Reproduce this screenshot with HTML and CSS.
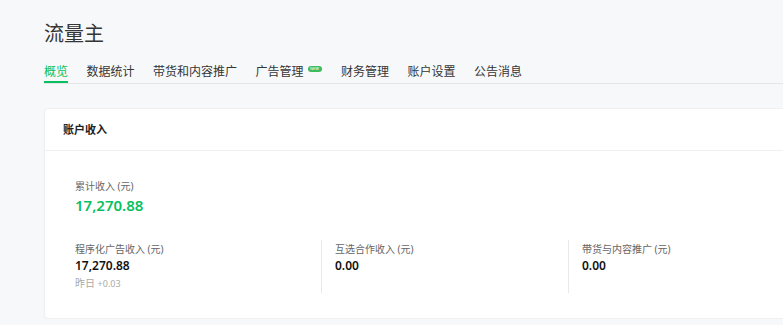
FILE: index.html
```html
<!DOCTYPE html>
<html lang="zh-CN">
<head>
    <meta charset="UTF-8">
    <title>流量主</title>
    <meta name="viewport" content="width=device-width, initial-scale=1.0">
    <link rel="stylesheet" href="styles.css">
</head>
<body>
    <div class="page">
        <div class="page-title">流量主</div>
        <div class="tabs">
            <div class="tab active">概览</div>
            <div class="tab">数据统计</div>
            <div class="tab">带货和内容推广</div>
            <div class="tab">广告管理<span class="badge-new">NEW</span></div>
            <div class="tab">财务管理</div>
            <div class="tab">账户设置</div>
            <div class="tab">公告消息</div>
        </div>

        <div class="card">
            <div class="card-header">账户收入</div>
            <div class="card-body">
                <div class="total-label">累计收入 (元)</div>
                <div class="total-value">17,270.88</div>
                <div class="income-row">
                    <div class="income-col">
                        <div class="income-label">程序化广告收入 (元)</div>
                        <div class="income-value">17,270.88</div>
                        <div class="income-sub">昨日 <span>+0.03</span></div>
                    </div>
                    <div class="income-col">
                        <div class="income-label">互选合作收入 (元)</div>
                        <div class="income-value">0.00</div>
                    </div>
                    <div class="income-col">
                        <div class="income-label">带货与内容推广 (元)</div>
                        <div class="income-value">0.00</div>
                    </div>
                </div>
            </div>
        </div>
    </div>
</body>
</html>
```

FILE: styles.css
```css
body {
    margin: 0;
    background: #f7f8fa;
    font-family: "Noto Sans", "Noto Sans CJK SC", sans-serif;
    color: #353535;
    overflow: hidden;
}

.page {
    padding: 20px 0 0 44px;
    width: 800px;
}

.page-title {
    font-size: 20px;
    line-height: 28px;
    color: #353535;
    margin-bottom: 15px;
}

.tabs {
    display: flex;
    gap: 18.5px;
    border-bottom: 1px solid #e4e5e7;
}

.tab {
    display: flex;
    align-items: flex-start;
    gap: 4px;
    font-size: 12px;
    line-height: 18px;
    color: #353535;
    border-bottom: 2px solid transparent;
}

.tab.active {
    color: #07c160;
    border-bottom-color: #07c160;
}

.badge-new {
    margin-top: 3px;
    margin-right: 1px;
    width: 14px;
    height: 6px;
    border-radius: 3px;
    background: #3fbb5c;
    color: #fff;
    font-size: 4px;
    line-height: 6px;
    text-align: center;
}

.card {
    margin-top: 24px;
    background: #fff;
    border-radius: 4px;
    border: 1px solid #eef0f2;
    box-shadow: 0 1px 2px rgba(0, 0, 0, 0.04);
}

.card-header {
    padding: 0 18px;
    height: 41px;
    line-height: 41px;
    font-size: 11px;
    font-weight: 600;
    color: #222;
    border-bottom: 1px solid #f0f0f0;
}

.card-body {
    padding: 27px 0 25px 30px;
}

.total-label {
    font-size: 10px;
    line-height: 16px;
    color: #666;
}

.total-value {
    font-size: 15px;
    line-height: 22px;
    font-weight: 600;
    color: #07c160;
}

.income-row {
    display: grid;
    grid-template-columns: 246px 247px 247px;
    margin-top: 24px;
}

.income-col {
    padding: 1px 0 2px 0;
    min-height: 48px;
}

.income-col + .income-col {
    border-left: 1px solid #e8e8e8;
    padding-left: 13px;
}

.income-label {
    font-size: 10px;
    line-height: 16px;
    color: #666;
}

.income-value {
    font-size: 12px;
    line-height: 18px;
    font-weight: 600;
    color: #111;
}

.income-sub {
    font-size: 10px;
    line-height: 14px;
    margin-top: 1px;
    color: #aaa;
}

.income-sub span {
    font-size: 9px;
}
```
